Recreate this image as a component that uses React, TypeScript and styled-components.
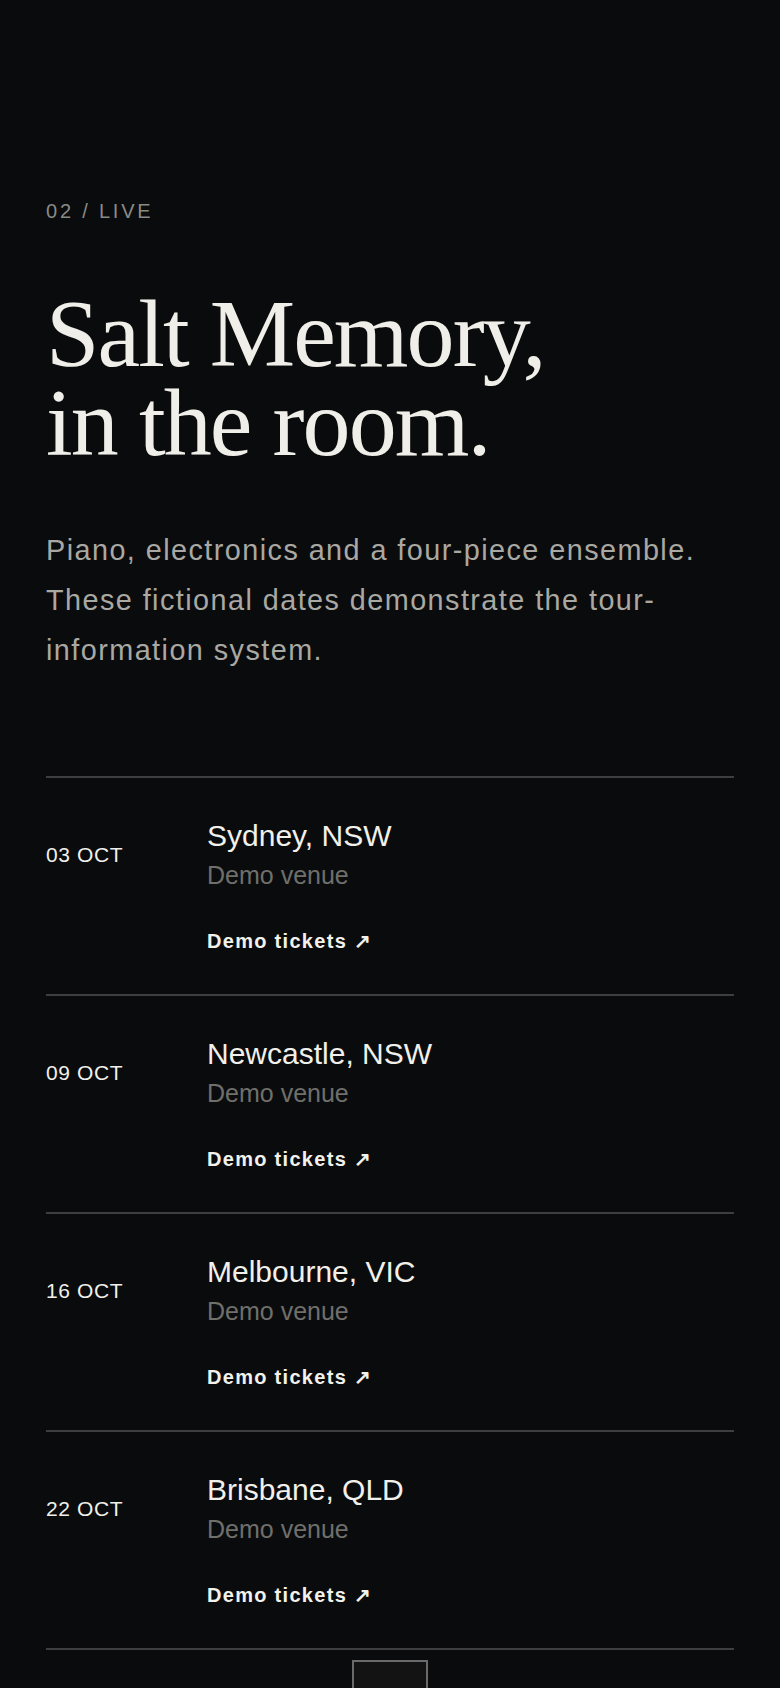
import React from "react";
import styled, { createGlobalStyle } from "styled-components";

const GlobalStyle = createGlobalStyle`
  html, body {
    margin: 0;
    background: #0a0b0d;
  }
  body {
    font-family: "Liberation Sans", Arial, sans-serif;
  }
`;

const Page = styled.main`
  padding: 199px 46px 0;
`;

const Eyebrow = styled.p`
  margin: 0;
  font-size: 20px;
  line-height: 1.2;
  letter-spacing: 0.14em;
  color: #8a8a85;
`;

const Title = styled.h1`
  margin: 66px 0 0;
  font-family: "Liberation Serif", "Times New Roman", serif;
  font-weight: 400;
  font-size: 96px;
  line-height: 0.93;
  letter-spacing: -0.02em;
  color: #efeee8;
`;

const Lede = styled.p`
  margin: 57px 0 0;
  font-size: 28.8px;
  line-height: 1.75;
  letter-spacing: 0.05em;
  color: #a9a8a2;
`;

const Dates = styled.ul`
  list-style: none;
  margin: 100px 0 0;
  padding: 0;
  border-top: 2px solid #3e3e3e;
`;

const Row = styled.li`
  display: grid;
  grid-template-columns: 161px 1fr;
  align-items: start;
  padding: 40px 0 41px;
  border-bottom: 2px solid #3e3e3e;
`;

const When = styled.time`
  margin-top: 24px;
  font-size: 21px;
  line-height: 1.2;
  letter-spacing: 0.03em;
  color: #f1f0ea;
`;

const Info = styled.div`
  display: flex;
  flex-direction: column;
  align-items: flex-start;
`;

const City = styled.h2`
  margin: 0 0 4px;
  font-size: 30px;
  font-weight: 400;
  line-height: 1.2;
  color: #f1f0ea;
`;

const Venue = styled.p`
  margin: 0;
  font-size: 25px;
  line-height: 1.4;
  color: #6f6f6b;
`;

const Tickets = styled.a`
  margin-top: 36px;
  font-size: 20px;
  font-weight: 700;
  line-height: 1.2;
  letter-spacing: 0.065em;
  color: #f2f1ec;
  text-decoration: none;
`;

const Footer = styled.div`
  display: flex;
  justify-content: center;
  padding-top: 10px;
`;

const TopButton = styled.button`
  width: 76px;
  height: 60px;
  background: #131313;
  border: 2px solid #6a6a6a;
  border-radius: 0;
  padding: 0;
`;

type Show = { date: string; city: string; venue: string };

const shows: Show[] = [
  { date: "03 OCT", city: "Sydney, NSW", venue: "Demo venue" },
  { date: "09 OCT", city: "Newcastle, NSW", venue: "Demo venue" },
  { date: "16 OCT", city: "Melbourne, VIC", venue: "Demo venue" },
  { date: "22 OCT", city: "Brisbane, QLD", venue: "Demo venue" },
];

const App: React.FC = () => {
  return (
    <>
      <GlobalStyle />
      <Page>
        <Eyebrow>02 / LIVE</Eyebrow>
        <Title>
          Salt Memory,
          <br />
          in the room.
        </Title>
        <Lede>
          Piano, electronics and a four-piece ensemble. These fictional dates
          demonstrate the tour-information system.
        </Lede>
        <Dates>
          {shows.map((show) => (
            <Row key={show.date}>
              <When>{show.date}</When>
              <Info>
                <City>{show.city}</City>
                <Venue>{show.venue}</Venue>
                <Tickets href="#">Demo tickets ↗</Tickets>
              </Info>
            </Row>
          ))}
        </Dates>
        <Footer>
          <TopButton aria-label="Back to top" />
        </Footer>
      </Page>
    </>
  );
};

export default App;
